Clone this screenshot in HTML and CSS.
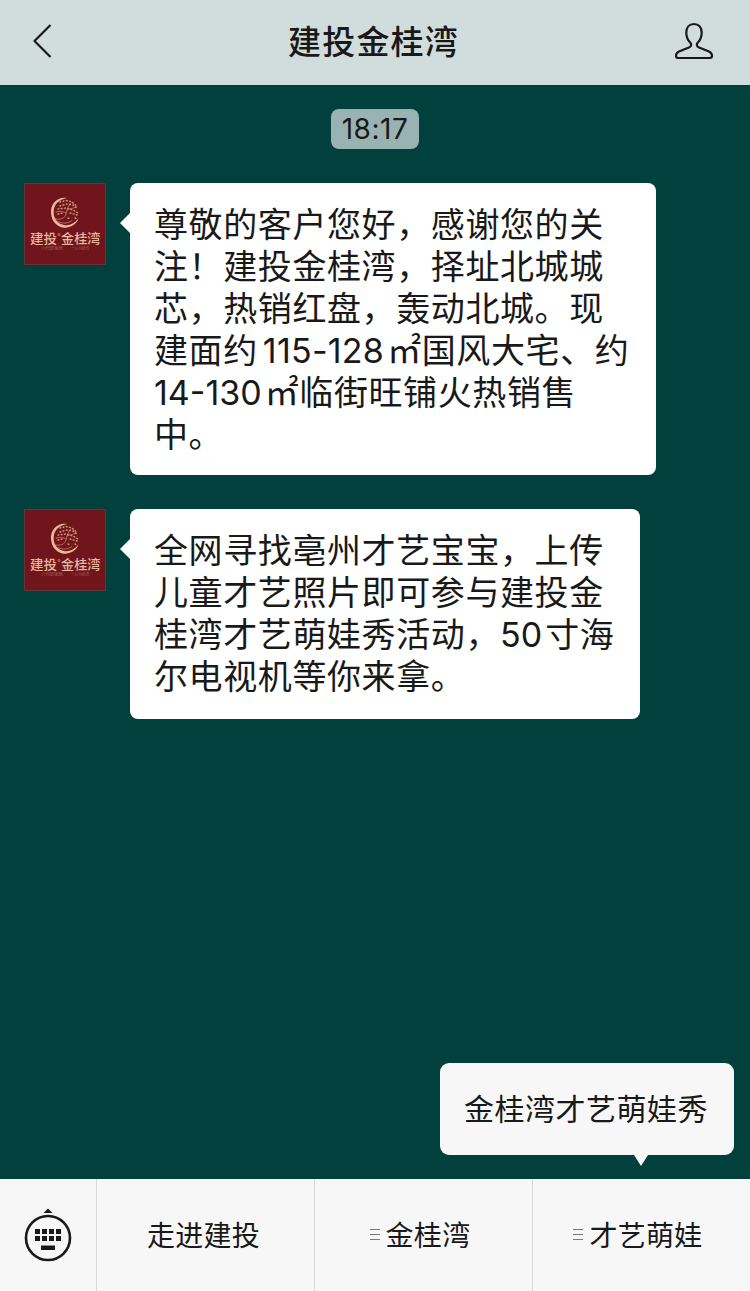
FILE: index.html
```html
<!DOCTYPE html>
<html lang="zh-CN">
<head>
  <meta charset="UTF-8">
  <title>建投金桂湾</title>
  <link rel="stylesheet" href="styles.css">
</head>
<body>

  <header class="navbar">
    <svg class="back" width="22" height="38" viewBox="0 0 22 38">
      <path d="M20.500 3L4.500 19L20.500 35" />
    </svg>
    <h1>建投金桂湾</h1>
    <svg class="profile" width="42" height="40" viewBox="0 0 42 40">
      <path d="M21 3C16 3 13.300 6.500 13.300 11.500C13.300 16 15 19.500 17.500 22C18.700 23.500 18.300 25.300 16.500 26.200L6 30.500C3.700 31.700 3 33 3 34.800C3 36.600 3.500 37 5 37H37C38.500 37 39 36.600 39 34.800C39 33 38.300 31.700 36 30.500L25.500 26.200C23.700 25.300 23.300 23.500 24.500 22C27 19.500 28.700 16 28.700 11.500C28.700 6.500 26 3 21 3Z" />
    </svg>
  </header>

  <main class="chat">
    <time class="timestamp">18:17</time>

    <div class="message">
      <svg class="avatar" viewBox="0 0 82 82">
        <g id="logo">
          <rect x="0.5" y="0.5" width="81" height="81" fill="#70151b" stroke="#653437"/>
          <!-- moon with an osmanthus tree inside -->
          <path d="M43 15C33 13.500 26.500 21 27 30C27.500 39.500 35 46 43 44.500C49 43.500 53 40 54.500 35.500C50 41 45 43 40 42C33 40.500 29.200 35 29.700 28C30.200 21 35 16.500 43 15Z" fill="#efb89b"/>
          <g fill="none" stroke="#d39079" stroke-width="0.7" stroke-linecap="round">
            <path d="M31 36c6 1 10-1 11-5c1-5 2-8 5-11M42 30c-3-2-6-2-10-1M43 27c3-2 6-1 9-3M34 38.500c5 2.500 10 2 14-1"/>
            <path stroke-width="1.5" stroke-dasharray="0.8 2.500" d="M36 19l6-1.500l6 1.500l4 3.500M36 23l6-2l7 1l5 4M34 26l8-1l7 2l5 3M46 30l7 2M44 35l3 1M51 35l2 1M34 31l5-1"/>
          </g>
          <g class="logo-text">
            <text x="6" y="60" textLength="27" lengthAdjust="spacingAndGlyphs">建投</text>
            <circle cx="35" cy="51.500" r="1" fill="none" stroke="#e5b099" stroke-width="0.6"/>
            <text x="37" y="60" textLength="39.500" lengthAdjust="spacingAndGlyphs">金桂湾</text>
          </g>
          <g class="logo-tagline">
            <text x="17" y="67" textLength="22" lengthAdjust="spacingAndGlyphs">六代筑家居</text>
            <text x="47" y="67" textLength="18" lengthAdjust="spacingAndGlyphs">一心为桂湾</text>
          </g>
        </g>
      </svg>
      <p class="bubble bubble-wide">尊敬的客户您好，感谢您的关注！建投金桂湾，择址北城城芯，热销红盘，轰动北城。现建面约<span class="num num-lead">115-128</span>㎡国风大宅、约<span class="num">14-130</span>㎡临街旺铺火热销售中。</p>
    </div>

    <div class="message">
      <svg class="avatar" viewBox="0 0 82 82"><use href="#logo"/></svg>
      <p class="bubble">全网寻找亳州才艺宝宝，上传儿童才艺照片即可参与建投金桂湾才艺萌娃秀活动，<span class="num">50</span>寸海尔电视机等你来拿。</p>
    </div>
  </main>

  <footer class="menu">
    <div class="keyboard">
      <svg width="48" height="54" viewBox="0 0 48 54">
        <path d="M19.500 5L24 0.500L28.500 5Z" fill="#191919"/>
        <circle cx="24" cy="30" r="22" fill="none" stroke="#191919" stroke-width="2.600"/>
        <path d="M11 21h5v5h-5zM18 21h5v5h-5zM25 21h5v5h-5zM32 21h5v5h-5zM11 28h5v5h-5zM18 28h5v5h-5zM25 28h5v5h-5zM32 28h5v5h-5zM17 37.500h14v4.500h-14z" fill="#191919"/>
      </svg>
    </div>
    <div class="menu-item">走进建投</div>
    <div class="menu-item"><i class="lines"></i>金桂湾</div>
    <div class="menu-item">
      <i class="lines"></i>才艺萌娃
      <div class="submenu">金桂湾才艺萌娃秀</div>
    </div>
  </footer>

</body>
</html>
```

FILE: styles.css
```css
* {
  box-sizing: border-box;
}
body {
  margin: 0;
  height: 1291px;
  display: flex;
  flex-direction: column;
  background: #02403e;
  color: #191919;
  font-family: Inter, "Noto Sans CJK SC", sans-serif;
}

/* top bar */
.navbar {
  height: 85px;
  padding: 0 35px 3px 30px;
  display: flex;
  align-items: center;
  justify-content: space-between;
  background: #d1dddd;
}
.navbar h1 {
  margin: 0 0 3px 22px;
  font-size: 33px;
  font-weight: 500;
  letter-spacing: 1.2px;
}
.navbar path {
  fill: none;
  stroke: #191919;
  stroke-width: 2.2;
  stroke-linejoin: round;
}

/* messages */
.chat {
  flex: 1;
  padding: 24px;
  display: flex;
  flex-direction: column;
  align-items: flex-start;
  gap: 34px;
}
.timestamp {
  align-self: center;
  width: 88px;
  height: 40px;
  border-radius: 8px;
  background: #99b3b2;
  font-size: 28px;
  line-height: 41px;
  letter-spacing: 0.5px;
  text-align: center;
}
.message {
  display: flex;
  align-items: flex-start;
  gap: 24px;
}
.avatar {
  width: 82px;
  height: 82px;
}
.logo-text {
  font-size: 13px;
  font-weight: 500;
  fill: #e8b7a1;
}
.logo-tagline {
  font-size: 4px;
  fill: #a95f55;
}
.bubble {
  position: relative;
  width: 510px;
  margin: 0;
  padding: 21px 24px;
  border-radius: 8px;
  background: #fff;
  font-size: 34px;
  line-height: 42px;
  letter-spacing: 0.6px;
}
.bubble-wide {
  width: 526px;
  padding-bottom: 19px;
}
.bubble::before {
  content: "";
  position: absolute;
  left: -10px;
  top: 30px;
  border: 10px solid transparent;
  border-left: 0;
  border-right-color: #fff;
}
.num {
  letter-spacing: 0;
  margin-right: 3px;
}
.num-lead {
  margin-left: 5px;
  letter-spacing: 0.25px;
}

/* bottom menu */
.menu {
  height: 112px;
  display: flex;
  background: #f7f7f7;
}
.keyboard {
  width: 96px;
  display: flex;
  align-items: center;
  justify-content: center;
  padding-bottom: 1px;
}
.menu-item {
  position: relative;
  flex: 1;
  display: flex;
  align-items: center;
  justify-content: center;
  padding: 0 4px 2px 0;
  border-left: 1px solid #d9d9d9;
  font-size: 28px;
  letter-spacing: 0.3px;
}
.lines {
  width: 10px;
  height: 11px;
  margin: 1px 6px 0 -3px;
  border-top: 1px solid #777;
  border-bottom: 1px solid #777;
  background: linear-gradient(#777, #777) center / 100% 1px no-repeat;
}
.submenu {
  position: absolute;
  right: 16px;
  bottom: 136px;
  width: 294px;
  height: 92px;
  padding-right: 2px;
  border-radius: 9px;
  background: #f7f7f7;
  font-size: 30px;
  line-height: 93px;
  letter-spacing: 0.5px;
  text-align: center;
}
.submenu::after {
  content: "";
  position: absolute;
  left: 194px;
  top: 92px;
  border: 7px solid transparent;
  border-top: 11px solid #f7f7f7;
  border-bottom: 0;
}
```
